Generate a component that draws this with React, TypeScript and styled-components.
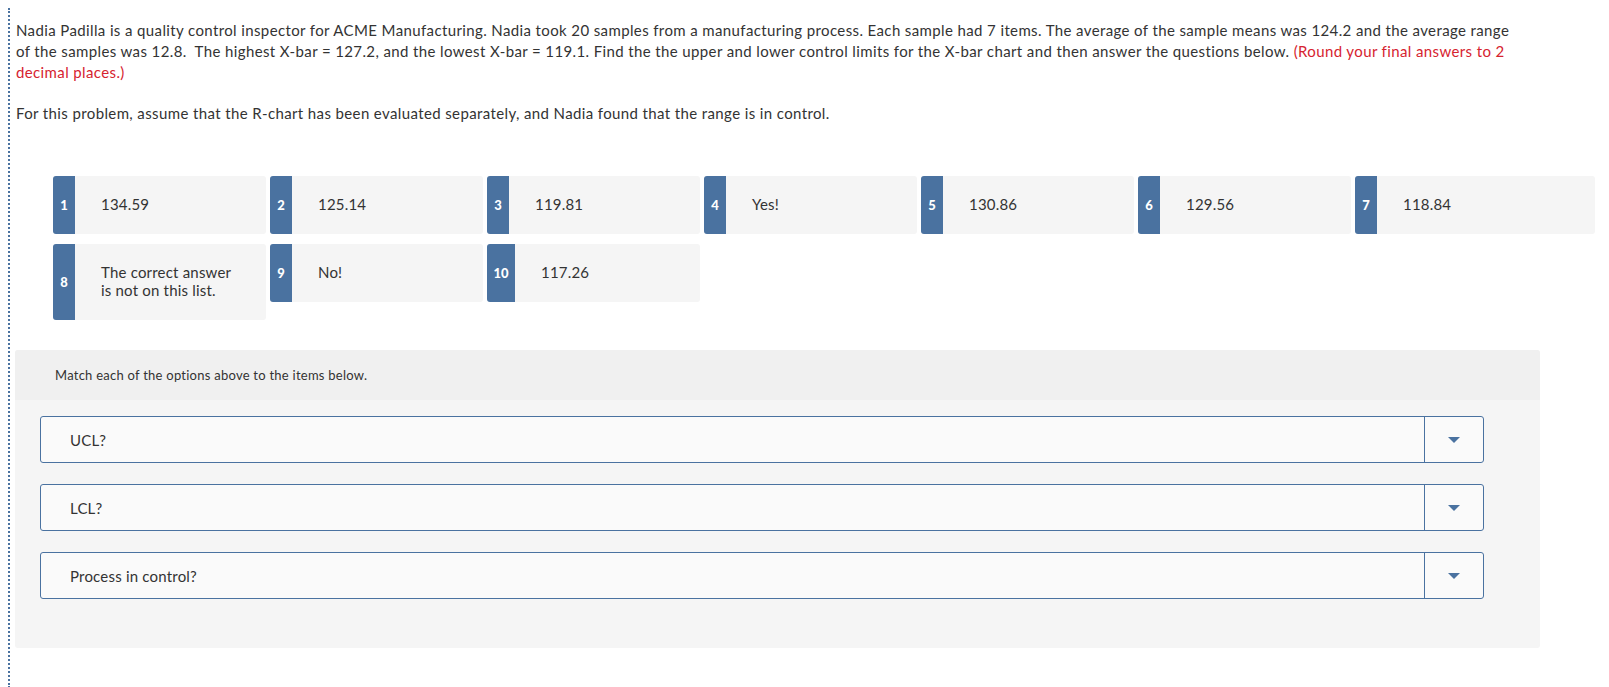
import React from "react";
import styled, { createGlobalStyle } from "styled-components";

const COLORS = {
	text: "#333333",
	red: "#d6232f",
	badge: "#4a72a0",
	tile: "#f5f5f5",
	panelHead: "#f0f0f0",
	panelBody: "#f5f5f5",
	select: "#fafafa",
};

const GlobalStyle = createGlobalStyle`
	html, body {
		margin: 0;
		padding: 0;
		background: #ffffff;
		overflow: hidden;
	}
	body {
		padding: 8px 0 0 8px;
		font-family: Lato, "Open Sans", sans-serif;
		color: ${COLORS.text};
	}
`;

const Question = (styled.div`
	border-left: 2px dotted ${COLORS.badge};
	padding: 12px 0 40px 6px;
	min-height: 660px;
	box-sizing: border-box;
`);

const Para = (styled.p`
	margin: 0 0 20px 0;
	font-size: 15px;
	line-height: 21px;
	letter-spacing: 0.38px;
	max-width: 1500px;
`);

const Hint = (styled.span`
	color: ${COLORS.red};
`);

const Options = (styled.div`
	display: grid;
	grid-template-columns: repeat(6, 213px) 240px;
	column-gap: 4px;
	row-gap: 10px;
	align-items: start;
	margin: 52px 0 0 37px;
`);

const Tile = (styled.div`
	display: flex;
	align-items: stretch;
	background: ${COLORS.tile};
	border-radius: 3px;
	font-size: 15px;
	line-height: 18px;
	letter-spacing: 0.2px;
`);

const Badge = (styled.div<{ $wide?: boolean }>`
	flex-shrink: 0;
	width: ${p => p.$wide ? 28 : 22}px;
	background: ${COLORS.badge};
	color: #ffffff;
	font-weight: 900;
	font-size: 13px;
	letter-spacing: 0;
	border-radius: 3px 0 0 3px;
	display: flex;
	align-items: center;
	justify-content: center;
`);

const Label = (styled.div`
	padding: 19px 26px 21px;
	max-width: 140px;
`);

const Panel = (styled.div`
	width: 1525px;
	margin: 30px 0 0 -1px;
	background: ${COLORS.panelBody};
	border-radius: 3px;
	padding-bottom: 49px;
`);

const PanelHead = (styled.div`
	background: ${COLORS.panelHead};
	height: 50px;
	display: flex;
	align-items: center;
	padding-left: 40px;
	font-size: 13px;
	letter-spacing: 0.25px;
	border-radius: 3px 3px 0 0;
`);

const SelectList = (styled.div`
	display: flex;
	flex-direction: column;
	gap: 21px;
	padding: 16px 56px 0 25px;
`);

const Select = (styled.div`
	display: flex;
	height: 47px;
	box-sizing: border-box;
	background: ${COLORS.select};
	border: 1px solid ${COLORS.badge};
	border-radius: 3px;
	font-size: 15px;
	letter-spacing: 0.2px;
`);

const SelectText = (styled.div`
	flex: 1;
	display: flex;
	align-items: center;
	padding-left: 29px;
`);

const Caret = (styled.div`
	width: 58px;
	border-left: 1px solid ${COLORS.badge};
	display: flex;
	align-items: center;
	justify-content: center;
`);

const options = [
	{ n: 1, text: "134.59" },
	{ n: 2, text: "125.14" },
	{ n: 3, text: "119.81" },
	{ n: 4, text: "Yes!" },
	{ n: 5, text: "130.86" },
	{ n: 6, text: "129.56" },
	{ n: 7, text: "118.84" },
	{ n: 8, text: "The correct answer is not on this list." },
	{ n: 9, text: "No!" },
	{ n: 10, text: "117.26" },
];

const items = ["UCL?", "LCL?", "Process in control?"];

export default function App() {
	return <>
		<GlobalStyle/>
		<Question>
			<Para>
				Nadia Padilla is a quality control inspector for ACME Manufacturing. Nadia took 20 samples from a manufacturing process. Each sample had 7 items. The average of the sample means was 124.2 and the average range of the samples was 12.8.&nbsp; The highest X-bar = 127.2, and the lowest X-bar = 119.1. Find the the upper and lower control limits for the X-bar chart and then answer the questions below. <Hint>(Round your final answers to 2 decimal places.)</Hint>
			</Para>
			<Para>
				For this problem, assume that the R-chart has been evaluated separately, and Nadia found that the range is in control.
			</Para>
			<Options>
				{options.map(o => (
					<Tile key={o.n}>
						<Badge $wide={o.n >= 10}>{o.n}</Badge>
						<Label>{o.text}</Label>
					</Tile>
				))}
			</Options>
			<Panel>
				<PanelHead>Match each of the options above to the items below.</PanelHead>
				<SelectList>
					{items.map(item => (
						<Select key={item}>
							<SelectText>{item}</SelectText>
							<Caret>
								<svg width="12" height="6" viewBox="0 0 12 6">
									<path d="M0 0 H12 L6 6 Z" fill={COLORS.badge}/>
								</svg>
							</Caret>
						</Select>
					))}
				</SelectList>
			</Panel>
		</Question>
	</>;
}
